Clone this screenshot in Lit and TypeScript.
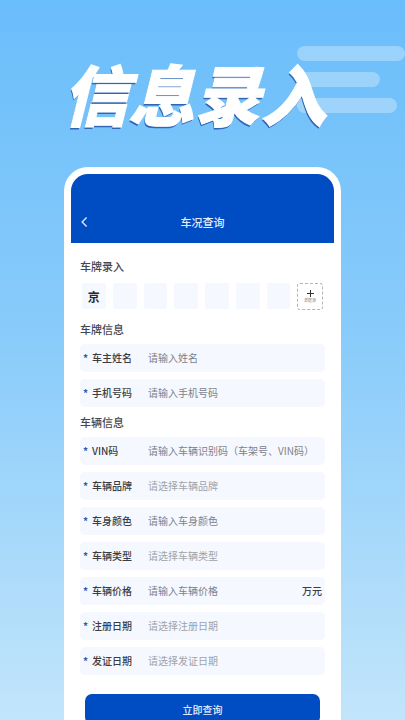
import { LitElement, html, css } from "lit";
import { customElement, property } from "lit/decorators.js";

interface Field {
  id: string;
  label: string;
  hint: string;
  pick?: boolean;
  unit?: string;
}

const OWNER: Field[] = [
  { id: "owner", label: "车主姓名", hint: "请输入姓名" },
  { id: "phone", label: "手机号码", hint: "请输入手机号码" },
];

const VEHICLE: Field[] = [
  { id: "vin", label: "VIN码", hint: "请输入车辆识别码（车架号、VIN码）" },
  { id: "brand", label: "车辆品牌", hint: "请选择车辆品牌", pick: true },
  { id: "color", label: "车身颜色", hint: "请输入车身颜色" },
  { id: "type", label: "车辆类型", hint: "请选择车辆类型", pick: true },
  { id: "price", label: "车辆价格", hint: "请输入车辆价格", unit: "万元" },
  { id: "registered", label: "注册日期", hint: "请选择注册日期", pick: true },
  { id: "issued", label: "发证日期", hint: "请选择发证日期", pick: true },
];

@customElement("form-row")
export class FormRow extends LitElement {
  @property({ attribute: false }) field!: Field;

  static styles = css`
    :host {
      display: flex;
      align-items: center;
      height: 28px;
      padding: 0 3px;
      border-radius: 5px;
      background: #f5f8ff;
      color: #3a3d43;
      font-size: 10px;
      line-height: 16px;
    }
    .label {
      display: flex;
      flex: none;
      width: 65px;
      font-weight: 500;
    }
    .star {
      width: 9px;
      color: #1f5fae;
      font-weight: 700;
    }
    .input {
      flex: 1;
      min-width: 0;
      height: 16px;
      padding: 0;
      border: 0;
      outline: 0;
      background: none;
      color: inherit;
      font: inherit;
    }
    .input::placeholder {
      color: #7c818c;
      opacity: 1;
      line-height: 16px;
    }
    .pick::placeholder {
      color: #a0a3a9;
    }
    .unit {
      font-weight: 500;
    }
  `;

  render() {
    const f = this.field;
    return html`
      <label class="label" for=${f.id}><span class="star">*</span>${f.label}</label>
      <input
        class="input ${f.pick ? "pick" : ""}"
        id=${f.id}
        type="text"
        placeholder=${f.hint}
        ?readonly=${!!f.pick}
      />
      ${f.unit ? html`<span class="unit">${f.unit}</span>` : null}
    `;
  }
}

@customElement("app-root")
export class AppRoot extends LitElement {
  static styles = css`
    :host {
      display: block;
      position: relative;
      height: 100vh;
      overflow: hidden;
      background: linear-gradient(#6abdfb, #8accfa 48%, #c2e5fb);
      font-family: "Noto Sans CJK SC", "Noto Sans", sans-serif;
    }
    * {
      box-sizing: border-box;
    }
    .bars {
      position: absolute;
      top: 46px;
      right: 0;
      width: 108px;
      display: grid;
      gap: 11px;
    }
    .bar {
      height: 15px;
      border-radius: 8px;
      background: rgba(255, 255, 255, 0.3);
    }
    .mid {
      width: 83px;
    }
    .low {
      width: 100px;
    }
    .banner {
      position: relative;
      margin: 0;
      padding: 44px 16px 0 0;
      color: #fff;
      font-size: 66px;
      font-style: italic;
      font-weight: 900;
      line-height: 96px;
      text-align: center;
      white-space: nowrap;
      -webkit-text-stroke: 1px #fff;
      text-shadow: -1px 2px 0 #2f66b4;
    }
    .phone {
      margin: 27px 64px 0;
      padding: 7px 7px 24px;
      border-radius: 24px;
      background: #fff;
    }
    .header {
      display: grid;
      grid-template-columns: 26px 1fr 26px;
      align-items: center;
      height: 69px;
      padding-top: 27px;
      border-radius: 17px 17px 0 0;
      background: #004cc3;
      color: #e4edfb;
    }
    .back {
      display: flex;
      justify-content: center;
      padding: 0;
      border: 0;
      background: none;
      color: inherit;
    }
    .title {
      margin: 0;
      font-size: 11px;
      font-weight: 500;
      line-height: 16px;
      text-align: center;
    }
    .content {
      padding: 15px 9px 0;
    }
    .heading {
      margin: 0;
      color: #44474d;
      font-size: 11px;
      font-weight: 500;
      line-height: 16px;
    }
    .plates {
      display: flex;
      gap: 7px;
      padding: 9px 2px 11px;
    }
    .plate {
      flex: 1;
      min-width: 0;
      height: 26px;
      padding: 0;
      border: 0;
      border-radius: 2px;
      outline: 0;
      background: #f5f8ff;
      color: #26282c;
      font: 700 12px "Noto Sans CJK SC", sans-serif;
      text-align: center;
    }
    .add {
      flex: 1;
      min-width: 0;
      display: flex;
      flex-direction: column;
      align-items: center;
      justify-content: center;
      gap: 1px;
      height: 27px;
      padding: 0;
      border: 1px dashed #b4b4b4;
      border-radius: 3px;
      background: #fff;
      color: #888;
      font: 4px "Noto Sans CJK SC", sans-serif;
      line-height: 5px;
    }
    .rows {
      display: grid;
      gap: 7px;
      padding: 7px 0;
    }
    .submit {
      display: block;
      width: calc(100% - 10px);
      height: 30px;
      margin: 12px auto 0;
      padding: 0;
      border: 0;
      border-radius: 7px;
      background: #004cc3;
      color: #e4edfb;
      font: 500 10px "Noto Sans CJK SC", sans-serif;
    }
  `;

  private rows(fields: Field[]) {
    return html`<div class="rows">
      ${fields.map((f) => html`<form-row .field=${f}></form-row>`)}
    </div>`;
  }

  render() {
    return html`
      <div class="bars">
        <div class="bar"></div>
        <div class="bar mid"></div>
        <div class="bar low"></div>
      </div>
      <h1 class="banner">信息录入</h1>
      <main class="phone">
        <header class="header">
          <button class="back" aria-label="返回">
            <svg width="8" height="12" viewBox="0 0 8 12" fill="none" stroke="currentColor" stroke-width="1.3">
              <path d="M6.6 1.5 2.1 6l4.5 4.5" />
            </svg>
          </button>
          <h2 class="title">车况查询</h2>
        </header>
        <form class="content">
          <h3 class="heading">车牌录入</h3>
          <div class="plates">
            <input class="plate" aria-label="车牌第1位" .value=${"京"} />
            ${[2, 3, 4, 5, 6, 7].map(
              (n) => html`<input class="plate" aria-label="车牌第${n}位" />`
            )}
            <button class="add" type="button">
              <svg width="7" height="7" viewBox="0 0 7 7" stroke="#333" stroke-width="1">
                <path d="M3.5 0v7M0 3.5h7" />
              </svg>
              新能源
            </button>
          </div>
          <h3 class="heading">车牌信息</h3>
          ${this.rows(OWNER)}
          <h3 class="heading">车辆信息</h3>
          ${this.rows(VEHICLE)}
          <button class="submit" type="button">立即查询</button>
        </form>
      </main>
    `;
  }
}
